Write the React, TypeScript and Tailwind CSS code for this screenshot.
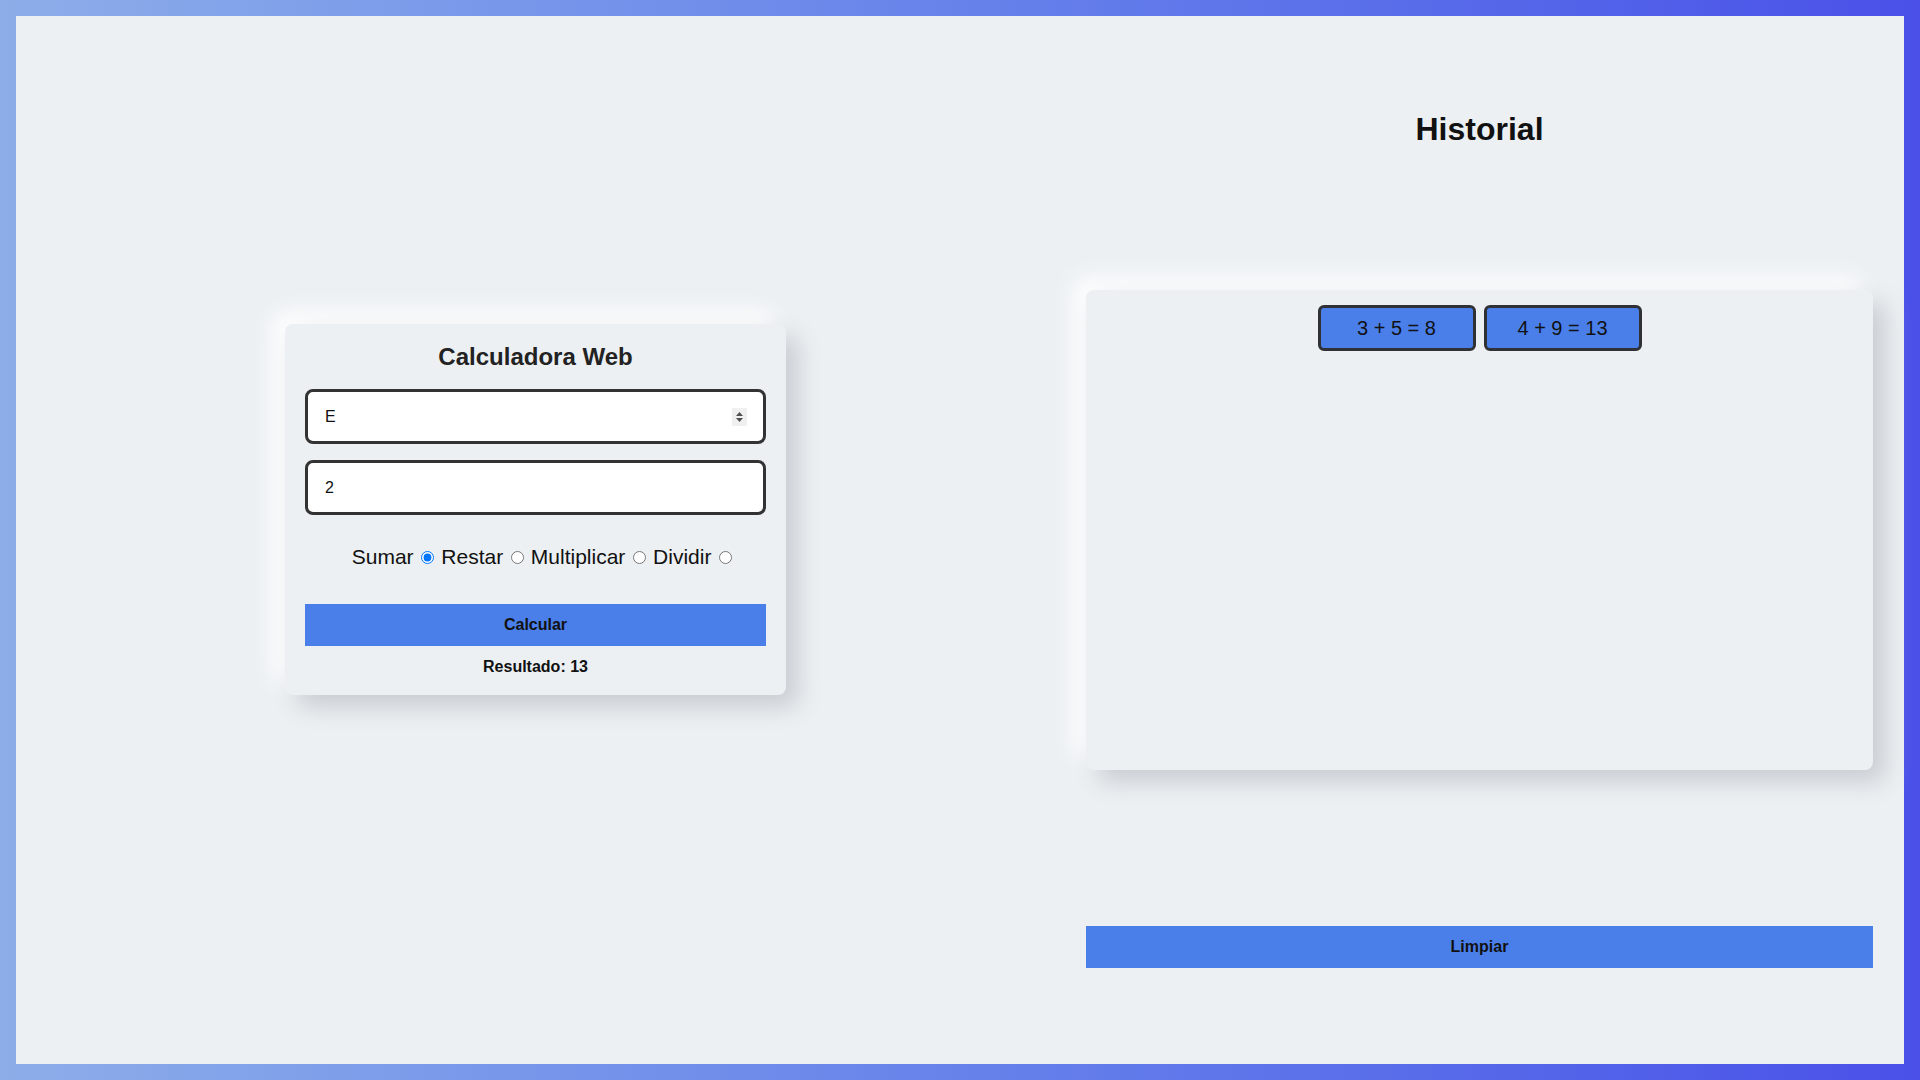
import React, { useState } from 'react';

const HISTORY = ['3 + 5 = 8', '4 + 9 = 13'];
const OPS = ['Sumar', 'Restar', 'Multiplicar', 'Dividir'];

const Spinner = () => (
  <div className="pointer-events-none absolute right-[19px] top-1/2 flex h-[18px] w-[15px] -translate-y-1/2 items-center justify-center bg-[#f0f0f0]">
    <svg width="9" height="12" viewBox="0 0 9 12">
      <path d="M4.5 1 L8 5 L1 5 Z" fill="#505050" />
      <path d="M4.5 11 L8 7 L1 7 Z" fill="#505050" />
    </svg>
  </div>
);

const App = () => {
  const [op, setOp] = useState('Sumar');

  return (
    <div className="h-screen w-full bg-linear-to-r from-[#8dade9] to-[#4a50e8] p-4 font-['Liberation_Sans',Arial,sans-serif]">
      <div className="flex h-full bg-[#ecf0f3]">
        {/* Calculadora */}
        <div className="ml-[269px] mt-[308px] flex w-[501px] flex-col self-start rounded-lg bg-[#ecf0f3] px-5 pb-[19px] pt-[19px] shadow-[12px_12px_24px_#c9cdd3,-12px_-12px_24px_#ffffff]">
          <h2 className="text-center text-2xl font-bold leading-7 text-[#222]">Calculadora Web</h2>

          <div className="relative mt-[18px]">
            <input
              type="text"
              defaultValue="E"
              className="h-[55px] w-full rounded-lg border-[3px] border-[#333] bg-white pl-[17px] text-base text-[#111] outline-none"
            />
            <Spinner />
          </div>
          <input
            type="text"
            defaultValue="2"
            className="mt-4 h-[55px] w-full rounded-lg border-[3px] border-[#333] bg-white pl-[17px] text-base text-[#111] outline-none"
          />

          <div className="mt-[30px] pl-[14px] text-center text-[21px] leading-6 text-[#111]">
            {OPS.map(name => (
              <React.Fragment key={name}>
                {name}{' '}
                <input
                  type="radio"
                  name="op"
                  checked={op === name}
                  onChange={() => setOp(name)}
                  className="ml-[2px] mr-[1px]"
                />{' '}
              </React.Fragment>
            ))}
          </div>

          <button
            type="button"
            className="mt-[35px] h-[42px] w-full bg-[#4a7fea] text-base font-bold text-[#111]"
          >
            Calcular
          </button>
          <p className="mt-3 text-center text-base font-bold leading-[18px] text-[#111]">Resultado: 13</p>
        </div>

        {/* Historial */}
        <div className="ml-[300px] flex w-[787px] flex-col">
          <h1 className="mt-[95px] text-center text-[32px] font-bold leading-[37px] text-[#111]">Historial</h1>

          <div className="mt-[142px] h-[480px] rounded-lg bg-[#edf0f3] shadow-[12px_12px_24px_#c9cdd3,-12px_-12px_24px_#ffffff]">
            <div className="flex justify-center gap-2 pt-[15px]">
              {HISTORY.map(item => (
                <div
                  key={item}
                  className="flex h-[46px] w-[158px] items-center justify-center rounded-md border-[3px] border-[#2f3137] bg-[#4a7fea] text-xl text-[#111]"
                >
                  {item}
                </div>
              ))}
            </div>
          </div>

          <button
            type="button"
            className="mt-[156px] h-[42px] w-full bg-[#4a7fea] text-base font-bold text-[#111]"
          >
            Limpiar
          </button>
        </div>
      </div>
    </div>
  );
};

export default App;
